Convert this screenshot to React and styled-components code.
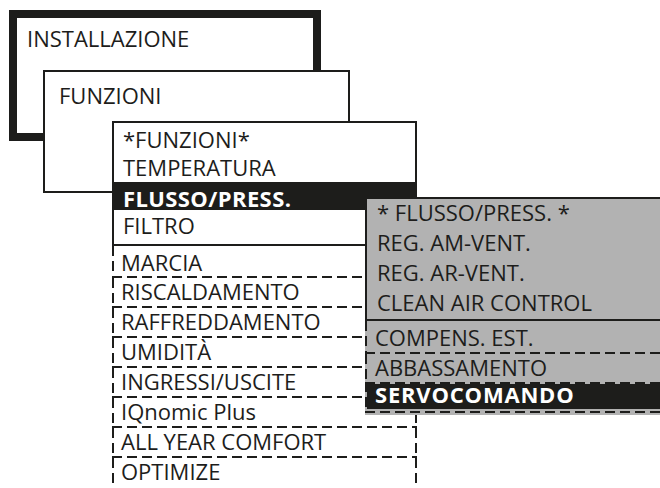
import React from "react";
import styled, { createGlobalStyle } from "styled-components";

const ink = "#1d1d1b";
const grey = "#b2b2b2";

const GlobalStyle = createGlobalStyle`
  html, body {
    margin: 0;
    padding: 0;
    background: #fff;
  }
  body {
    font-family: "Open Sans", "Liberation Sans", sans-serif;
  }
`;

// dashed edges drawn as gradients so dash/gap match the print (10px / 5px)
const dash = (dir) =>
  `repeating-linear-gradient(${dir}, ${ink} 0 10px, transparent 10px 15px)`;

const edgeLayer = {
  t: [dash("90deg"), "100% 2px", "left top"],
  b: [dash("90deg"), "100% 2px", "left bottom"],
  l: [dash("180deg"), "2px 100%", "left top"],
  r: [dash("180deg"), "2px 100%", "right top"],
};

const dashed = (edges = "") => {
  const layers = edges.split("").map((e) => edgeLayer[e]);
  if (!layers.length) return "";
  return `
    background-image: ${layers.map((l) => l[0]).join(", ")};
    background-size: ${layers.map((l) => l[1]).join(", ")};
    background-position: ${layers.map((l) => l[2]).join(", ")};
    background-repeat: no-repeat;
  `;
};

const Stage = styled.div`
  position: relative;
  width: 660px;
  height: 488px;
  overflow: hidden;
  background: #fff;
  color: ${ink};
  font-size: 22px;
`;

const Window = styled.div`
  position: absolute;
  left: ${(p) => p.$x}px;
  top: ${(p) => p.$y}px;
  width: ${(p) => p.$w}px;
  height: ${(p) => p.$h}px;
  box-sizing: border-box;
  background: #fff;
  border: ${(p) => p.$bw}px solid ${ink};
`;

const WindowTitle = styled.div`
  line-height: 22px;
  padding: ${(p) => p.$pt}px 0 0 ${(p) => p.$pl}px;
`;

const Menu = styled.div`
  position: absolute;
  left: 112px;
  top: 121px;
  width: 305px;
  display: flex;
  flex-direction: column;
`;

const MenuBox = styled.div`
  border: 2px solid ${ink};
  background: #fff;
`;

const Item = styled.div`
  box-sizing: border-box;
  height: ${(p) => p.$h}px;
  padding: ${(p) => p.$pt ?? 4.5}px 0 0 9px;
  line-height: 22px;
  white-space: nowrap;
  background-color: ${(p) => (p.$active ? ink : "transparent")};
  color: ${(p) => (p.$active ? "#fff" : ink)};
  font-weight: ${(p) => (p.$active ? 700 : 400)};
  letter-spacing: ${(p) => (p.$active ? "0.4px" : "0")};
`;

const DashItem = styled(Item)`
  background-color: #fff;
  ${(p) => dashed(p.$edges)}
`;

const Panel = styled.div`
  position: absolute;
  left: 365px;
  top: 197px;
  width: 300px;
  display: flex;
  flex-direction: column;
  background: ${grey};
  padding-bottom: 2px;
`;

const PanelBox = styled.div`
  border: 2px solid ${ink};
  border-right: none;
`;

const PanelItem = styled(Item)`
  padding-left: 10px;
  ${(p) => dashed(p.$edges)}
`;

const PanelSelect = styled.div`
  box-sizing: border-box;
  height: 31px;
  padding: 2px 0 4px 2px;
  ${dashed("tlb")}
`;

const SelectBar = styled.div`
  height: 25px;
  background: ${ink};
  color: #fff;
  font-weight: 700;
  letter-spacing: 0.8px;
  line-height: 20px;
  padding-left: 8px;
`;

const functions = [
  "MARCIA",
  "RISCALDAMENTO",
  "RAFFREDDAMENTO",
  "UMIDITÀ",
  "INGRESSI/USCITE",
  "IQnomic Plus",
  "ALL YEAR COMFORT",
  "OPTIMIZE",
];

export default function App() {
  return (
    <>
      <GlobalStyle />
      <Stage>
        <Window $x={9} $y={10} $w={312} $h={131} $bw={8}>
          <WindowTitle $pt={8.5} $pl={10}>
            INSTALLAZIONE
          </WindowTitle>
        </Window>

        <Window $x={43} $y={70} $w={307} $h={123} $bw={2}>
          <WindowTitle $pt={11.5} $pl={14}>
            FUNZIONI
          </WindowTitle>
        </Window>

        <Menu>
          <MenuBox>
            <Item $h={28}>*FUNZIONI*</Item>
            <Item $h={31}>TEMPERATURA</Item>
            <Item $h={28} $active>
              FLUSSO/PRESS.
            </Item>
            <Item $h={34} $pt={3.5}>
              FILTRO
            </Item>
          </MenuBox>
          {functions.map((name, i) => {
            const last = i === functions.length - 1;
            return (
              <DashItem
                key={name}
                $h={i === 0 ? 32 : last ? 40 : 30}
                $pt={i === 0 ? 4.5 : 1.5}
                $edges={last ? "lr" : "lrb"}
              >
                {name}
              </DashItem>
            );
          })}
        </Menu>

        <Panel>
          <PanelBox>
            <PanelItem $h={30} $pt={1.5}>* FLUSSO/PRESS. *</PanelItem>
            <PanelItem $h={30} $pt={1.5}>REG. AM-VENT.</PanelItem>
            <PanelItem $h={30} $pt={1.5}>REG. AR-VENT.</PanelItem>
            <PanelItem $h={30} $pt={1.5}>CLEAN AIR CONTROL</PanelItem>
          </PanelBox>
          <PanelItem $h={33} $pt={4.5} $edges="lb">
            COMPENS. EST.
          </PanelItem>
          <PanelItem $h={28} $pt={1.5} $edges="l">
            ABBASSAMENTO
          </PanelItem>
          <PanelSelect>
            <SelectBar>SERVOCOMANDO</SelectBar>
          </PanelSelect>
        </Panel>
      </Stage>
    </>
  );
}
